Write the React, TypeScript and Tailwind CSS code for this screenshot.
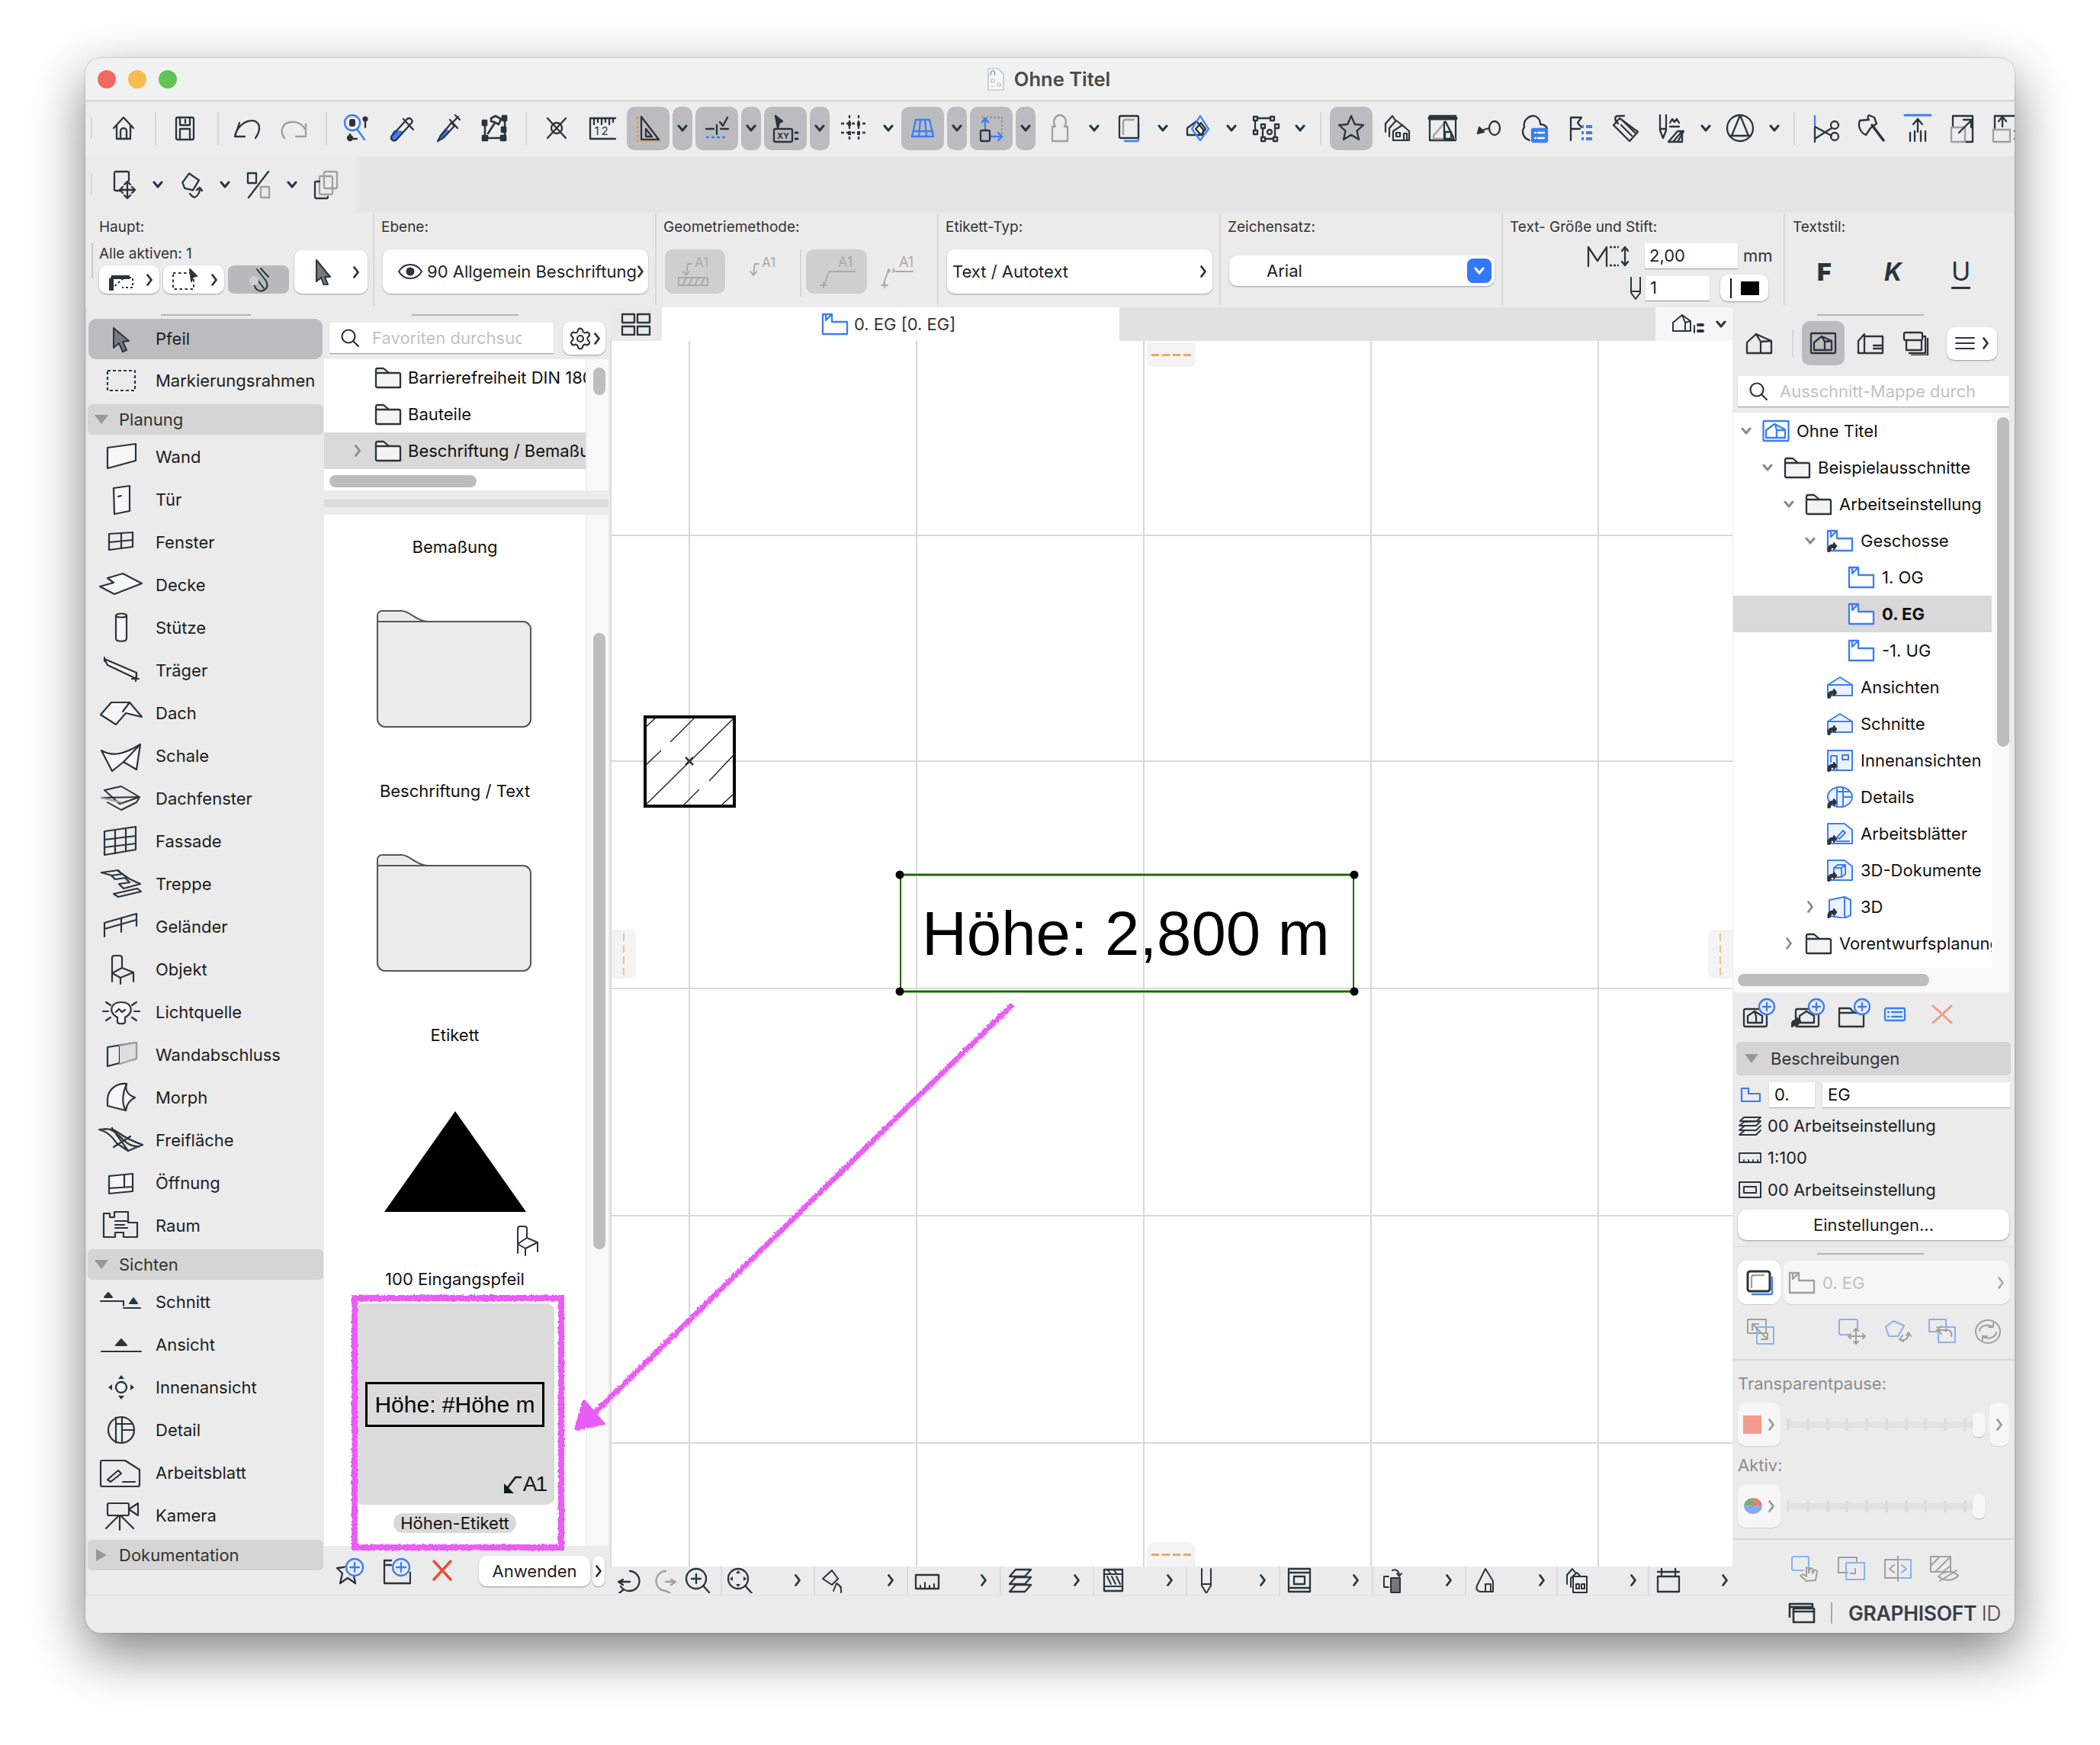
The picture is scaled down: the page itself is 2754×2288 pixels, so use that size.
import React from 'react';
import { Settings } from 'lucide-react';

const D = '#2b343d';
const B = '#3d7df6';
const G = '#a0a0a0';
const L = '#8db0f5';
const O = '#f0902f';

type P = { w?: number; h?: number; sw?: number; c?: string; children?: React.ReactNode; vb?: string };
const S = ({ w = 40, h = 40, sw = 2.3, c = D, vb, children }: P) => (
  <svg width={w} height={h} viewBox={vb || `0 0 ${w} ${h}`} fill="none" stroke={c} strokeWidth={sw} strokeLinejoin="round" strokeLinecap="round" className="block shrink-0">
    {children}
  </svg>
);
const V = ({ c = D }: { c?: string }) => (
  <S w={14} h={10} sw={3} c={c}><path d="M2 2l5 6 5-6" /></S>
);
const R = ({ c = D, s = 2.8 }: { c?: string; s?: number }) => (
  <S w={10} h={18} sw={s} c={c}><path d="M2.5 2.5L7.5 9l-5 6.5" /></S>
);

const Slot = ({ a, children }: { a?: boolean; children?: React.ReactNode }) => (
  <div className="flex h-[57px] w-[60px] shrink-0 items-center justify-center">
    <div className={a ? 'flex h-[57px] w-[56px] items-center justify-center rounded-[10px] bg-[#bcbcc0]' : 'flex h-[57px] w-[56px] items-center justify-center'}>{children}</div>
  </div>
);
const Ch = ({ a, c = 'w-[30px]' }: { a?: boolean; c?: string }) => (
  <div className={`flex h-[57px] shrink-0 items-center justify-center ${c}`}>
    <div className={a ? 'flex h-[57px] w-[26px] items-center justify-center rounded-[10px] bg-[#bcbcc0]' : 'flex h-[57px] w-[26px] items-center justify-center'}><V /></div>
  </div>
);
const Sep = ({ c = '' }: { c?: string }) => <div className={`w-[2px] shrink-0 bg-[#d6d6d6] ${c}`} />;

/* ---------- top toolbar icons ---------- */
const T = {
  home: <S><path d="M7 20L20 6l13 14M11 16v18h18V16M16 34V24a4 4 0 0 1 8 0v10" /></S>,
  save: <S><rect x="9" y="6" width="23" height="29" rx="2" /><path d="M14 6v10h13V6M21 9v4M14 35V21h13v14" /></S>,
  undo: <S w={44}><path d="M5 31h13M5 31l6-18M5 31C9 9 37 3 37 20c0 6-3 10-5 13" /></S>,
  redo: <S w={44} c={G}><path d="M38 31H25M38 31V15M10 33c-6-8-4-20 9-21 8-1 14 3 18 9" /></S>,
  insp: (
    <S>
      <circle cx="15" cy="13" r="10" stroke={B} />
      <rect x="11" y="8" width="8" height="10" rx="3" fill={D} stroke="none" />
      <path d="M21 21l10 14" stroke={B} />
      <path d="M32 7v12M12 28v6h9" />
      <circle cx="32" cy="8" r="2.4" fill={D} />
      <circle cx="12" cy="33" r="3" fill={D} />
    </S>
  ),
  pick: (
    <S>
      <path d="M10 24L6 32a3.5 3.5 0 0 0 6 3l9-10z" fill={B} stroke={B} />
      <path d="M27 8L7 30a3.6 3.6 0 0 0 6 5L33 13a4 4 0 0 0-6-5zM22 8l13 14" />
    </S>
  ),
  inj: (
    <S>
      <path d="M17 22l-7 9 4 2 8-8z" fill={B} stroke={B} />
      <path d="M25 13L11 30l-4 7 7-4 15-16zM23 9l10 11M27 12l7-7M30 3l6 6" />
    </S>
  ),
  ham: (
    <S sw={2.6}>
      <path d="M10 33h25M35 33V7M9 28V14" />
      <rect x="6" y="30" width="6" height="6" fill={D} />
      <rect x="30" y="30" width="6" height="6" fill={D} />
      <rect x="32" y="4" width="5" height="6" fill={D} />
      <rect x="31" y="19" width="5" height="6" fill={D} />
      <rect x="6" y="10" width="5" height="6" fill={D} />
      <path d="M13 27l9-14M17 7l6-3 7 4-3 7-6-3-4-1z" />
    </S>
  ),
  cross: <S><circle cx="20" cy="20" r="7" /><path d="M8 7l24 26M32 7L8 33" /></S>,
  ruler: (
    <S>
      <path d="M4 7h33M4 7v27h33M9 7v8M14 7v5M19 7v8M24 7v5M29 7v8M34 7v5" />
      <text x="20" y="29" textAnchor="middle" fontSize="15" fill={D} stroke="none" fontFamily="Inter,sans-serif" letterSpacing="3">12</text>
    </S>
  ),
  tri: (
    <S>
      <path d="M11 5l23 30H11z M17 21l8 10h-8z" />
      <path d="M6 5v32h30" stroke={O} strokeDasharray="3 3" strokeLinecap="butt" />
    </S>
  ),
  snap: (
    <S>
      <path d="M6 21h10M25 21h10M20 16v12M24 12l4 5 6-11" />
      <path d="M6 32h28" stroke={B} strokeDasharray="4 3" strokeLinecap="butt" />
    </S>
  ),
  xy: (
    <S>
      <path d="M7 4l9 7-4 2-2 7z" fill={D} stroke={D} />
      <rect x="5" y="21" width="24" height="17" rx="2" />
      <text x="17" y="34" textAnchor="middle" fontSize="11" fontWeight="700" fill={D} stroke="none" fontFamily="Inter,sans-serif">XY</text>
      <path d="M33 26h3M33 34h3" strokeWidth="3" />
    </S>
  ),
  grid: (
    <S>
      <path d="M14 3v34M26 3v34M3 14h34M3 26h34" strokeDasharray="4 3" strokeLinecap="butt" />
      <rect x="12" y="12" width="4" height="5" fill={D} stroke="none" />
      <rect x="24" y="12" width="4" height="5" fill={D} stroke="none" />
      <rect x="12" y="24" width="4" height="5" fill={D} stroke="none" />
      <rect x="24" y="24" width="4" height="5" fill={D} stroke="none" />
    </S>
  ),
  trap: <S c={B}><path d="M11 9h18l5 22H6zM8 24h25M17 9l-2 22M23 9l2 22" /></S>,
  wallb: (
    <S>
      <path d="M8 6h26v28" stroke={G} strokeDasharray="3 2" strokeWidth="3" strokeLinecap="butt" />
      <path d="M12 22V8M8 12l4-5 4 5M19 31h15M29 26l5 5-5 5" stroke={B} />
      <rect x="6" y="23" width="12" height="14" rx="2" />
    </S>
  ),
  pers: <S c={G}><path d="M14 18c-5-8 1-15 6-15s11 7 6 15h4v19H10V18z" /></S>,
  stack: (
    <S>
      <path d="M33 14v21a2 2 0 0 1-2 2H15" stroke={B} />
      <rect x="8" y="4" width="25" height="29" rx="2" />
      <path d="M13 28V12a3 3 0 0 1 3-3h11" stroke={G} />
    </S>
  ),
  dia: (
    <S>
      <path d="M7 20l12-9 9 11v7H7zM18 21l7-8 6 8-6 8z" />
      <path d="M24 4l11 17-11 15-11-15z" stroke={B} />
    </S>
  ),
  nodes: (
    <S>
      <rect x="4" y="5" width="5" height="5" /><rect x="26" y="5" width="5" height="5" />
      <rect x="4" y="23" width="5" height="5" /><rect x="32" y="15" width="5" height="5" />
      <rect x="14" y="32" width="5" height="5" /><rect x="30" y="32" width="5" height="5" />
      <rect x="14" y="15" width="5" height="5" />
      <path d="M9 7h17M6 10v13M32 20v12M19 34h11M16 20v12" />
      <circle cx="25" cy="25" r="3" />
    </S>
  ),
  star: <S><path d="M20 4l4.7 11 11.3 1-8.6 7.6 2.7 11.4-10.1-6.2L9.900 35l2.700-11.400L4 16l11.300-1z" /></S>,
  houses: (
    <S sw={2.2}>
      <path d="M5 25V14L14 4l4 6M10 31V20l9-10 9 7" />
      <path d="M15 36V24l12-8 9 8v12z" />
      <rect x="19" y="26" width="5" height="5" />
      <path d="M29 36V27h4v9" />
    </S>
  ),
  winh: (
    <S>
      <rect x="3" y="4" width="34" height="32" />
      <path d="M3 7h34" strokeWidth="5" />
      <path d="M24 11l-16 19v4h28" stroke={G} />
      <path d="M24 12l10 20v3H22V12z" fill="#ebebeb" />
      <rect x="23" y="25" width="8" height="9" />
    </S>
  ),
  key: (
    <S>
      <ellipse cx="28" cy="20" rx="7" ry="9" />
      <path d="M21 20l-10 3" />
      <path d="M6 27l2-8 6 6z" fill={D} />
    </S>
  ),
  cloud: (
    <S>
      <path d="M14 36C5 33 3 24 7 19 5 10 12 5 17 4c6-1 11 4 11 11 6 0 8 3 9 6" />
      <rect x="17" y="21" width="20" height="17" rx="2" fill={B} stroke={B} />
      <path d="M21 26h1M25 26h8M21 33h1M25 33h8" stroke="#fff" />
    </S>
  ),
  flist: (
    <S>
      <path d="M8 36V6h14l-5 7 5 6M8 21h12" />
      <path d="M22 18h3M28 18h8M22 26h3M28 26h8M22 34h3M28 34h8" stroke={B} strokeWidth="4" strokeLinecap="butt" />
    </S>
  ),
  tag: (
    <S>
      <path d="M12 8l24 18-11 12L4 17z" transform="translate(0 -1)" />
      <path d="M14 16l14 14M17 11l15 15" />
      <path d="M10 14C5 10 5 4 10 4h8" />
    </S>
  ),
  penz: (
    <S>
      <path d="M5 3v20l4 10 4-10V3M5 21h8" />
      <path d="M18 13l3-5 3 4 3-4 3 5M18 18h12" />
      <path d="M16 38l12-14h8l-8 14z M22 38l12-14M34 24v14h-6" />
    </S>
  ),
  circ: <S><ellipse cx="20" cy="20" rx="17" ry="17" /><path d="M20 3L9 30h22zM6 30h28" /></S>,
  scis: (
    <S>
      <path d="M5 4v12" stroke={B} />
      <path d="M5 20v18M5 18l22 12M5 34l22-14" />
      <circle cx="31" cy="16" r="5" />
      <circle cx="31" cy="31" r="5" />
    </S>
  ),
  axe: (
    <S>
      <path d="M16 3c-2 2-2 4 0 6L4 10c-3 8 1 16 8 19l6-9 8-6-3-8z" />
      <path d="M20 16l15 20" strokeWidth="3.500" />
    </S>
  ),
  up: (
    <S>
      <path d="M3 3h34" stroke={B} strokeWidth="3" />
      <path d="M20 8v17M14 15l6-7 6 7M10 26v11M16 24v13M24 24v13M30 24v13" />
    </S>
  ),
  resz: (
    <S>
      <path d="M6 18V4h26v34H22" />
      <rect x="4" y="19" width="18" height="19" stroke={G} />
      <path d="M14 26l16-16M20 9h10v10" />
    </S>
  ),
  upb: (
    <S>
      <path d="M8 20V4h26" />
      <rect x="6" y="22" width="22" height="16" stroke={G} />
      <path d="M18 18V6M13 11l5-6 5 6M34 24h4M34 34h4" />
    </S>
  ),
  mv: (
    <S>
      <path d="M14 28H9a2 2 0 0 1-2-2V5a2 2 0 0 1 2-2h15a2 2 0 0 1 2 2v10" />
      <path d="M24 16v22M14 27h20M20 20l4-4 4 4M20 34l4 4 4-4M18 23l-4 4 4 4M30 23l4 4-4 4" />
    </S>
  ),
  rot: (
    <S>
      <path d="M8 19l7-13 14 7-6 14-11-1z" transform="rotate(8 20 20)" />
      <path d="M24 37c4-2 6-4 7-10M27 27l4-3 3 4M18 32c2 3 4 4 6 5" />
    </S>
  ),
  pct: (
    <S>
      <rect x="6" y="5" width="11" height="13" />
      <path d="M33 3L7 37" />
      <rect x="23" y="23" width="11" height="14" stroke={G} />
    </S>
  ),
  copy: (
    <S>
      <rect x="18" y="3" width="17" height="22" rx="2" stroke={G} />
      <rect x="12" y="9" width="17" height="24" rx="2" stroke={G} />
      <path d="M12 16H8a2 2 0 0 0-2 2v18a2 2 0 0 0 2 2h14a2 2 0 0 0 1-2" />
    </S>
  ),
};

/* ---------- element list icons ---------- */
const E = ({ children, sw = 2.2 }: { children: React.ReactNode; sw?: number }) => (
  <S w={60} h={42} sw={sw}>{children}</S>
);
const F = '#f7f7f7';
const tools1 = [
  ['Wand', <E><path d="M12 9l37-5v22L12 36z" fill={F} /></E>],
  ['Tür', <E><path d="M20 6l21-3v33l-20 4z" fill={F} /><path d="M26 17l4-1" /></E>],
  ['Fenster', <E><path d="M14 10l31-2v19l-31 4z" /><path d="M30 9v20M14 21l31-3" /></E>],
  ['Decke', <E><path d="M2 23l18-5-8-6 20-6 25 13-36 14z" fill={F} /></E>],
  ['Stütze', <E><path d="M23 5v30c0 5 14 5 14 0V5" fill={F} /><ellipse cx="30" cy="5" rx="7" ry="2.500" fill={F} /></E>],
  ['Träger', <E><path d="M8 6L50 24v8L12 14zM8 4v5M50 24l-1 11M44 32h9" fill={F} /></E>],
  ['Dach', <E><path d="M3 23L17 7h24l16 19-21-5-13 15z" fill={F} /><path d="M41 7l-9 12" /></E>],
  ['Schale', <E><path d="M4 14c14 8 28 6 51-8l-5 33-17-10-15 12z" fill={F} /><path d="M33 29L55 6" /></E>],
  ['Dachfenster', <E sw={2}><path d="M8 10l22-5 24 14-26 9z" /><path d="M4 20l50-1-4 7-20 10-18-10" /><path d="M4 20l26 6" stroke={G} /></E>],
  ['Fassade', <E><path d="M8 8l41-6v30L8 39zM8 19l41-5M8 29l41-5M22 6v31M36 4v30" /></E>],
  ['Treppe', <E><path d="M4 6l22-3 5 5-14 2 5 5 13-2 6 6-14 2 6 6 22-6-15-7-7-5-7-5" /><path d="M4 6l14 4" /><path d="M26 38l30-7-5-4-31 7z" /></E>],
  ['Geländer', <E><path d="M8 16L50 4M8 24l42-12M8 16v18M30 10v18M50 4v16" /></E>],
  ['Objekt', <E><path d="M18 26V6a3 3 0 0 1 3-3h7a3 3 0 0 1 3 3v13l15 6M18 26l13-7M18 26l11 6 17-7M18 26v11M29 32v8M46 25v12" /></E>],
  ['Lichtquelle', (
    <E><path d="M22 26c-8-6-6-18 8-18s16 12 8 18l-3 2v6c0 3-10 3-10 0v-6z" fill={F} /><path d="M23 21l4-4 4 4 4-3M6 20h7M47 20h7M10 8l6 4M50 8l-6 4M10 32l6-4M50 32l-6-4" /></E>
  )],
  ['Wandabschluss', <E><path d="M12 11l38-6v21l-38 10z" /><path d="M28 9v24" /><path d="M28 9l22-4v21l-22 7" stroke={G} fill="#dedede" /></E>],
  ['Morph', <E><path d="M12 24C12 12 22 2 37 3c-2 8 0 14 11 18-6 3-11 9-12 17L12 32z" fill={F} /><path d="M36 38C30 28 32 14 37 3" /></E>],
  ['Freifläche', <E><path d="M1 7c16-2 20 0 28 6s18 10 29 14l-19 8-15-10C18 16 12 10 1 7zM18 5c6 10 16 22 21 30M42 16l-22 14M8 6c20 0 24 24 44 23" /></E>],
  ['Öffnung', <E><path d="M14 12l31-3v23l-31 3zM14 28l31-2M34 10v16" fill={F} /></E>],
  ['Raum', <E><path d="M7 5h8v5h6V3h18v14h12v19H33v-6H22v6H7zM22 15h16M22 20h12M22 24h16" /></E>],
] as [string, React.ReactNode][];
const tools2 = [
  ['Schnitt', <E sw={2}><path d="M3 20h30v6M33 29h22" /><path d="M13 9l5 6H8zM46 16l5 7H41z" fill={D} /></E>],
  ['Ansicht', <E sw={2}><path d="M4 30h52" /><path d="M30 14l7 8H23z" fill={D} /></E>],
  ['Innenansicht', (
    <S w={60} h={40}><circle cx="30" cy="20" r="7" fill={F} /><path d="M30 4l4 5h-8zM30 36l4-5h-8zM13 20l5-4v8zM47 20l-5-4v8z" fill={D} stroke="none" /></S>
  )],
  ['Detail', <E><ellipse cx="30" cy="21" rx="17" ry="17" /><path d="M23 4.500v33M31 3.800v34M31 21h16M23 13h22" /></E>],
  ['Arbeitsblatt', (
    <E><path d="M5 5h30l19 12v20a2 2 0 0 1-2 2H5a2 2 0 0 1-2-2V7a2 2 0 0 1 2-2z" /><path d="M12 30l14-12 4 4-14 11zM32 33h16" /></E>
  )],
  ['Kamera', <E><rect x="12" y="5" width="28" height="16" rx="2" /><path d="M40 13l12-8v16zM28 22v18M26 22L10 38M30 22l16 16" /></E>],
] as [string, React.ReactNode][];

const Row = ({ label, icon, a }: { label: string; icon: React.ReactNode; a?: boolean }) => (
  <div className={a ? 'mx-[2px] flex h-[53px] items-center rounded-[10px] bg-[#bcbcc0] pl-[13px]' : 'mx-[2px] flex h-[56px] items-center pl-[13px]'}>
    <div className="mr-[15px] flex w-[60px] shrink-0 justify-center">{icon}</div>
    <span className="whitespace-nowrap text-[22px] text-[#1d1d1d]">{label}</span>
  </div>
);
const Head = ({ label, open = true, c = 'mt-[3px]' }: { label: string; open?: boolean; c?: string }) => (
  <div className={`mx-px flex h-[40px] items-center rounded-[6px] bg-[#d5d5d5] ${c}`}>
    <div className="ml-[9px] mr-[14px] flex w-[18px] justify-center">
      {open ? (
        <svg width="18" height="12"><path d="M0 0h18L9 12z" fill="#989898" /></svg>
      ) : (
        <svg width="14" height="16"><path d="M0 0l14 8-14 8z" fill="#989898" /></svg>
      )}
    </div>
    <span className="text-[22px] text-[#333]">{label}</span>
  </div>
);

const Folder = () => (
  <S w={36} h={30}><path d="M2 26V5a2 2 0 0 1 2-2h8l7 6h13a2 2 0 0 1 2 2v17H4a2 2 0 0 1-2-2zM2 9h17" fill="#f4f4f4" /></S>
);
const BigFolder = () => (
  <svg width="205" height="155" viewBox="0 0 205 155" fill="#ebebeb" stroke="#555" strokeWidth="2" className="-ml-[2px] -mt-[10px] block">
    <path d="M2 143V8a6 6 0 0 1 6-6h26c10 0 20 14 34 14h125a10 10 0 0 1 10 10v118a10 10 0 0 1-10 10H12a10 10 0 0 1-10-10z" />
    <path d="M2 16h66" />
  </svg>
);
const Search = ({ c = D }: { c?: string }) => (
  <S w={26} h={26} c={c} sw={2.2}><circle cx="11" cy="11" r="8.500" /><path d="M17 17l7 7" /></S>
);
const Floor = ({ c = B, badge, fill = '#fff' }: { c?: string; badge?: boolean; fill?: string }) => (
  <S w={36} h={30} c={c}>
    <path d="M2 2h12l0 10h20v16H2zM6 2v8l6-6" fill={fill} />
    {badge && <Bdg />}
  </S>
);
const Bdg = () => (
  <path d="M2 29v-3c0-4 3-6 7-6l1-3 4 5-4 5-1-3c-2 0-3 1-3 3l-1 2z" fill={D} stroke={D} strokeWidth="1" />
);
const Tico = ({ children }: { children: React.ReactNode }) => (
  <S w={36} h={30} c={B} sw={2}>{children}<Bdg /></S>
);

const treeRows: { l: string; d: number; ch?: 'v' | 'r'; ic: React.ReactNode; sel?: boolean }[] = [
  { l: 'Ohne Titel', d: 0, ch: 'v', ic: <S w={36} h={30} c={B}><rect x="1.500" y="2" width="33" height="26" rx="1" /><path d="M5 24V14l11-8 14 7v11zM17 6l2 8v10M19 14l11 0" /></S> },
  { l: 'Beispielausschnitte', d: 1, ch: 'v', ic: <Folder /> },
  { l: 'Arbeitseinstellung', d: 2, ch: 'v', ic: <Folder /> },
  { l: 'Geschosse', d: 3, ch: 'v', ic: <Floor badge /> },
  { l: '1. OG', d: 4, ic: <Floor /> },
  { l: '0. EG', d: 4, ic: <Floor />, sel: true },
  { l: '-1. UG', d: 4, ic: <Floor /> },
  { l: 'Ansichten', d: 3, ic: <Tico><path d="M2 12L18 2l16 10v14H2z" fill="#eaf2ff" /><path d="M2 12h32" /></Tico> },
  { l: 'Schnitte', d: 3, ic: <Tico><path d="M2 12L18 2l16 10v14H2z" fill="#eaf2ff" /><path d="M2 12h32" /></Tico> },
  { l: 'Innenansichten', d: 3, ic: <Tico><rect x="2" y="2" width="32" height="26" fill="#eaf2ff" /><path d="M14 28V9h-8v8M21 8h8v6h-8z" /></Tico> },
  { l: 'Details', d: 3, ic: <Tico><ellipse cx="18" cy="15" rx="16" ry="13" fill="#eaf2ff" /><path d="M14 2v26M22 2v26M22 15h12M14 8h16" /></Tico> },
  { l: 'Arbeitsblätter', d: 3, ic: <Tico><path d="M2 2h22l10 8v18H2z" fill="#eaf2ff" /><path d="M14 20l8-9 3 3-8 8zM14 25h16" /></Tico> },
  { l: '3D-Dokumente', d: 3, ic: <Tico><path d="M2 2h22l10 8v18H2z" fill="#eaf2ff" /><path d="M10 12h10l5-4M10 12v12h10V12M20 24l5-4V8H15l-5 4" /></Tico> },
  { l: '3D', d: 3, ch: 'r', ic: <Tico><path d="M4 6l20-4 8 4v20l-8 4-20-3z" fill="#eaf2ff" /><path d="M24 2v28" /></Tico> },
  { l: 'Vorentwurfsplanung', d: 2, ch: 'r', ic: <Folder /> },
];

const Slider = () => (
  <div className="relative ml-[8px] h-[32px] w-[260px]">
    <div className="absolute left-0 right-[10px] top-[12px] h-[8px] bg-[#e2e2e2]" />
    <div className="absolute left-0 right-[24px] top-[8px] flex justify-between">
      {[0, 1, 2, 3, 4, 5, 6, 7, 8, 9].map((i) => (
        <div key={i} className="h-[16px] w-[4px] bg-[#dddddd]" />
      ))}
    </div>
    <div className="absolute right-0 top-0 h-[32px] w-[16px] rounded-[6px] bg-[#f6f6f6] shadow-[0_1px_1px_rgba(0,0,0,0.2)]" />
  </div>
);

const white = 'rounded-[10px] bg-white shadow-[0_1px_2px_rgba(0,0,0,0.35)]';
const soft = 'rounded-[10px] bg-[#f6f6f6] shadow-[0_1px_1px_rgba(0,0,0,0.12)]';

const DashH = () => (
  <div className="flex gap-[4px]">
    {[0, 1, 2, 3].map((i) => <div key={i} className="h-[3px] w-[10px] bg-[#f2a55a]" />)}
  </div>
);
const DashV = () => (
  <div className="flex flex-col gap-[5px]">
    {[0, 1, 2, 3].map((i) => <div key={i} className="h-[10px] w-[2px] bg-[#f4c08d]" />)}
  </div>
);

const LabelSec = ({ t, c = 'w-[370px]', children }: { t: string; c?: string; children?: React.ReactNode }) => (
  <div className={`relative h-[120px] shrink-0 border-r-2 border-[#d8d8d8] pl-[9px] ${c}`}>
    <div className="flex h-[34px] items-center text-[19px] leading-none text-[#333]">{t}</div>
    {children}
  </div>
);

export default function App() {
  return (
    <div className="relative h-[2288px] w-[2754px] overflow-hidden bg-white pl-[112px] pt-[76px] font-['Inter',sans-serif]">
      <div className="flex h-[2065px] w-[2530px] flex-col overflow-hidden rounded-[20px] bg-[#ebebeb] shadow-[0_26px_70px_rgba(0,0,0,0.5),0_0_2px_rgba(0,0,0,0.4)]">
        {/* title bar */}
        <div className="relative flex h-[57px] shrink-0 items-center justify-center border-b-2 border-[#d4d4d4] bg-[#f0f1f1]">
          <div className="absolute left-[16px] flex gap-[16px]">
            <div className="h-[24px] w-[24px] rounded-full bg-[#ee6a5f]" />
            <div className="h-[24px] w-[24px] rounded-full bg-[#f5bd4f]" />
            <div className="h-[24px] w-[24px] rounded-full bg-[#61c454]" />
          </div>
          <div className="flex items-center gap-[12px] pr-[4px]">
            <S w={24} h={30} sw={1.200} c="#b9b9b9"><path d="M2 1h13l7 7v21H2z" fill="#f8f8f8" /><path d="M5 9c1-7 5-7 6 0" stroke={B} /><path d="M6 15h4v4H6zM14 20h4v4h-4zM6 24h4" /></S>
            <span className="text-[25.500px] font-semibold leading-none text-[#4a4a4a]">Ohne Titel</span>
          </div>
        </div>

        {/* toolbar 1 */}
        <div className="flex h-[72px] shrink-0 items-center overflow-hidden bg-[#ededed] pl-[7px] pb-[2px]">
          <Sep c="mr-[11px] h-[28px]" />
          <Slot>{T.home}</Slot>
          <Sep c="ml-[11px] mr-[7px] h-[43px]" />
          <Slot>{T.save}</Slot>
          <Sep c="ml-[13px] mr-[8px] h-[43px]" />
          <Slot>{T.undo}</Slot>
          <Slot>{T.redo}</Slot>
          <Sep c="ml-[12px] mr-[8px] h-[43px]" />
          <Slot>{T.insp}</Slot>
          <Slot>{T.pick}</Slot>
          <Slot>{T.inj}</Slot>
          <Slot>{T.ham}</Slot>
          <Sep c="ml-[12px] mr-[9px] h-[43px]" />
          <Slot>{T.cross}</Slot>
          <Slot>{T.ruler}</Slot>
          <Slot a>{T.tri}</Slot>
          <Ch a />
          <Slot a>{T.snap}</Slot>
          <Ch a />
          <Slot a>{T.xy}</Slot>
          <Ch a />
          <Slot>{T.grid}</Slot>
          <Ch />
          <Slot a>{T.trap}</Slot>
          <Ch a />
          <Slot a>{T.wallb}</Slot>
          <Ch a />
          <Slot>{T.pers}</Slot>
          <Ch />
          <Slot>{T.stack}</Slot>
          <Ch />
          <Slot>{T.dia}</Slot>
          <Ch />
          <Slot>{T.nodes}</Slot>
          <Ch />
          <Sep c="ml-[11px] mr-[9px] h-[43px]" />
          <Slot a>{T.star}</Slot>
          <Slot>{T.houses}</Slot>
          <Slot>{T.winh}</Slot>
          <Slot>{T.key}</Slot>
          <Slot>{T.cloud}</Slot>
          <Slot>{T.flist}</Slot>
          <Slot>{T.tag}</Slot>
          <Slot>{T.penz}</Slot>
          <Ch />
          <Slot>{T.circ}</Slot>
          <Ch />
          <Sep c="ml-[10px] mr-[11px] h-[43px]" />
          <Slot>{T.scis}</Slot>
          <Slot>{T.axe}</Slot>
          <Slot>{T.up}</Slot>
          <Slot>{T.resz}</Slot>
          <div className="-ml-[7px]"><Slot>{T.upb}</Slot></div>
        </div>

        {/* toolbar 2 */}
        <div className="flex h-[74px] shrink-0 bg-[#e5e5e5]">
          <div className="flex w-[355px] items-center bg-[#ebebeb] pl-[7px]">
            <Sep c="mr-[12px] h-[28px]" />
            <Slot>{T.mv}</Slot>
            <Ch c="w-[28px]" />
            <Slot>{T.rot}</Slot>
            <Ch c="w-[28px]" />
            <Slot>{T.pct}</Slot>
            <Ch c="w-[28px]" />
            <Slot>{T.copy}</Slot>
          </div>
        </div>

        {/* info box */}
        <div className="flex h-[124px] shrink-0 bg-[#ebebeb] pt-[1px]">
          <LabelSec t="Haupt:" c="w-[379px] pl-[18px]">
            <div className="mt-[-20px] flex h-[91px] items-end">
              <div className="relative w-[254px]">
                <div className="text-[19px] leading-none text-[#333]">Alle aktiven: 1</div>
                <div className="absolute -left-[10px] -top-[4px] h-[46px] w-[2px] bg-[#c8c8c8]" />
                <div className="mt-[6px] flex gap-[5px]">
                  <div className={`flex h-[37px] w-[79px] items-center justify-between pl-[10px] pr-[8px] ${white}`}>
                    <S w={36} h={30} sw={2}><path d="M6 27L26 9M4 15h4M4 23V12h30v13H20" strokeDasharray="3 3" strokeLinecap="butt" /><rect x="3" y="13" width="6" height="16" fill={D} stroke="none" /><rect x="6" y="9" width="24" height="5" fill={D} stroke="none" /></S>
                    <R />
                  </div>
                  <div className={`flex h-[37px] w-[80px] items-center justify-between pl-[10px] pr-[8px] ${white}`}>
                    <S w={36} h={30} sw={2}><rect x="3" y="6" width="27" height="21" strokeDasharray="3.500 3.500" strokeLinecap="butt" /><path d="M25 1l9 9-5 1-2 6z" fill={D} /></S>
                    <R />
                  </div>
                  <div className="flex h-[37px] w-[80px] items-center justify-center rounded-[8px] bg-[#b9b9bd]">
                    <S w={32} h={34} sw={2}><path d="M14 3l11 14c4 6 3 12-3 14s-10-2-11-6l-2-6M19 2l10 11M14 16l9 12" /><circle cx="10" cy="18" r="6" fill="#cfcfcf" stroke="none" /></S>
                  </div>
                </div>
              </div>
              <div className={`ml-[2px] flex h-[57px] w-[96px] items-center justify-between pl-[28px] pr-[10px] ${white}`}>
                <svg width="20" height="34" viewBox="0 0 20 34"><path d="M1 1l18 22-7 0 4 10-5 1-4-10-6 5z" fill="#757a80" stroke={D} strokeWidth="2" strokeLinejoin="round" /></svg>
                <R />
              </div>
            </div>
          </LabelSec>
          <LabelSec t="Ebene:">
            <div className={`ml-[2px] mt-[13px] flex h-[58px] w-[348px] items-center ${white}`}>
              <div className="ml-[20px] mr-[6px] shrink-0">
                <S w={32} h={24} sw={2}><path d="M1 12C8 0 24 0 31 12 24 24 8 24 1 12z" /><circle cx="16" cy="12" r="5.500" fill={D} stroke="none" /></S>
              </div>
              <span className="whitespace-nowrap text-[22px] leading-none text-[#222]">90 Allgemein Beschriftung</span>
              <div className="ml-auto mr-[5px]"><R /></div>
            </div>
          </LabelSec>
          <LabelSec t="Geometriemethode:">
            <div className="mt-[13px] flex items-start pl-[2px]">
              <div className="flex h-[58px] w-[79px] items-center justify-center rounded-[10px] bg-[#cfcfcf]">
                <GeoA hatch />
              </div>
              <div className="flex h-[58px] w-[98px] items-center justify-center"><GeoA /></div>
              <div className="mr-[6px] h-[62px] w-[2px] bg-[#d6d6d6]" />
              <div className="flex h-[58px] w-[80px] items-center justify-center rounded-[10px] bg-[#cfcfcf]"><GeoB /></div>
              <div className="flex h-[58px] w-[80px] items-center justify-center"><GeoB dots /></div>
            </div>
          </LabelSec>
          <LabelSec t="Etikett-Typ:">
            <div className={`ml-[2px] mt-[13px] flex h-[58px] w-[348px] items-center justify-between pl-[7px] pr-[7px] ${white}`}>
              <span className="text-[22px] leading-none text-[#222]">Text / Autotext</span>
              <R />
            </div>
          </LabelSec>
          <LabelSec t="Zeichensatz:">
            <div className={`ml-[2px] mt-[21px] flex h-[40px] w-[348px] items-center justify-between pl-[49px] pr-[4px] ${white}`}>
              <span className="text-[22px] leading-none text-[#222]">Arial</span>
              <div className="flex h-[32px] w-[32px] items-center justify-center rounded-[8px] bg-[#3478f6]"><V c="#fff" /></div>
            </div>
          </LabelSec>
          <LabelSec t="Text- Größe und Stift:">
            <div className="absolute left-[110px] top-[39px] flex h-[33px] items-center">
              <S w={56} h={30}><path d="M2 28V3l12 18L26 3v25" /><path d="M30 3h12M30 27h12" strokeDasharray="3 2" strokeLinecap="butt" /><path d="M50 4v22M46 8l4-5 4 5M46 22l4 5 4-5" /></S>
              <div className="ml-[20px] flex h-[33px] w-[122px] items-center bg-white pl-[6px] text-[22px] text-[#222] shadow-[0_1px_1px_rgba(0,0,0,0.3)]">2,00</div>
              <span className="ml-[7px] text-[22px] text-[#333]">mm</span>
            </div>
            <div className="absolute left-[166px] top-[80px] flex h-[35px] items-center">
              <S w={16} h={32} sw={2}><path d="M2 2v20l6 8 6-8V2M2 20h12" /></S>
              <div className="ml-[5px] flex h-[32px] w-[84px] items-center bg-white pl-[6px] text-[22px] text-[#222] shadow-[0_1px_1px_rgba(0,0,0,0.3)]">1</div>
              <div className={`ml-[14px] flex h-[35px] w-[63px] items-center justify-center gap-[12px] ${white}`}>
                <div className="h-[26px] w-[2px] bg-[#111]" />
                <div className="h-[18px] w-[24px] bg-black" />
              </div>
            </div>
          </LabelSec>
          <div className="relative h-[120px] flex-1 pl-[10px]">
            <div className="flex h-[34px] items-center text-[19px] leading-none text-[#333]">Textstil:</div>
            <div className="mt-[23px] flex pl-[32px]">
              <span className="w-[88px] text-[32px] font-black leading-[40px] text-[#2b343d]">F</span>
              <span className="w-[88px] text-[32px] font-bold italic leading-[40px] text-[#2b343d]">K</span>
              <span className="h-[42px] border-b-[3px] border-[#2b343d] text-[34px] leading-[38px] text-[#2b343d]">U</span>
            </div>
          </div>
        </div>

        {/* main */}
        <div className="flex min-h-0 flex-1">
          {/* left tool list */}
          <div className="w-[313px] shrink-0 border-l-2 border-[#dcdcdc]">
            <div className="mx-auto mt-[9px] h-[2px] w-[118px] bg-[#b5b5b5]" />
            <div className="mt-[4px]">
              <Row label="Pfeil" a icon={<svg width="24" height="34" viewBox="0 0 24 34"><path d="M2 2l20 17-8 1 5 11-5 2-5-11-7 6z" fill="#757a80" stroke={D} strokeWidth="2" strokeLinejoin="round" /></svg>} />
              <Row label="Markierungsrahmen" icon={<S w={40} h={32} sw={2.200}><rect x="2" y="3" width="36" height="26" strokeDasharray="4 3" strokeLinecap="butt" /></S>} />
            </div>
            <Head label="Planung" c="mb-[1px] mt-[3px]" />
            {tools1.map(([l, ic]) => <Row key={l} label={l} icon={ic} />)}
            <Head label="Sichten" c="mb-[1px] mt-[3px]" />
            {tools2.map(([l, ic]) => <Row key={l} label={l} icon={ic} />)}
            <Head label="Dokumentation" open={false} c="mt-[4px]" />
          </div>

          {/* favorites */}
          <div className="flex w-[375px] shrink-0 flex-col">
            <div className="flex h-[20px] shrink-0 items-center justify-center pr-[6px]"><div className="h-[2px] w-[140px] bg-[#b5b5b5]" /></div>
            <div className="flex h-[48px] shrink-0 items-start pl-[7px]">
              <div className="flex h-[40px] w-[294px] items-center bg-white pl-[14px] shadow-[0_1px_1px_rgba(0,0,0,0.3)]">
                <Search />
                <span className="ml-[16px] w-[196px] overflow-hidden whitespace-nowrap text-[22px] leading-none text-[#c2c2c2]">Favoriten durchsuchen</span>
              </div>
              <div className={`-mt-[1px] ml-[12px] flex h-[43px] w-[56px] items-center justify-center gap-[1px] ${white}`}>
                <Settings size={32} strokeWidth={1.600} color={D} />
                <R />
              </div>
            </div>
            <div className="flex h-[172px] w-[373px] shrink-0 bg-[#f9f9f9]">
              <div className="h-[172px] w-[345px] shrink-0 overflow-hidden border-r-2 border-[#eeeeee] bg-white">
                {['Barrierefreiheit DIN 18040', 'Bauteile', 'Beschriftung / Bemaßung'].map((t, i) => (
                  <div key={t} className={i === 2 ? 'flex h-[48px] items-center bg-[#d9d9d9] pl-[39px]' : 'flex h-[48px] items-center pl-[39px]'}>
                    <div className="w-[18px] shrink-0">{i === 2 && <R c="#888" />}</div>
                    <div className="ml-[9px] mr-[8px] shrink-0"><Folder /></div>
                    <span className="whitespace-nowrap text-[22px] leading-none text-[#111]">{t}</span>
                  </div>
                ))}
              </div>
              <div className="pl-[8px] pt-[11px]"><div className="h-[36px] w-[16px] rounded-full bg-[#bdbdbd]" /></div>
            </div>
            <div className="relative -mt-[20px] ml-[7px] h-[16px] w-[193px] rounded-full bg-[#bdbdbd]" />
            <div className="mt-[16px] h-[10px] w-[373px] shrink-0 bg-[#dcdcdc]" />
            <div className="mt-[10px] flex h-[1352px] w-[373px] shrink-0 bg-[#f9f9f9]">
              <div className="h-full w-[345px] shrink-0 overflow-hidden border-r-2 border-[#eeeeee] bg-white">
                <div className="flex h-[74px] items-center justify-center pt-[10px]"><span className="text-[22px] text-[#111]">Bemaßung</span></div>
                <Card label="Beschriftung / Text"><BigFolder /></Card>
                <Card label="Etikett"><BigFolder /></Card>
                <Card label="100 Eingangspfeil">
                  <div className="relative flex h-[264px] w-[261px] items-start justify-center pt-[68px]">
                    <svg width="186" height="132"><path d="M93 0l93 132H0z" fill="#000" /></svg>
                    <div className="absolute bottom-[4px] right-[18px]">
                      <S w={36} h={44} sw={2}><path d="M6 26V6a3 3 0 0 1 3-3h6a3 3 0 0 1 3 3v12l14 6M6 26l12-8M6 26l10 6 16-8M6 26v12M16 32v9M32 24v12" /></S>
                    </div>
                  </div>
                </Card>
                <Card label="Höhen-Etikett" sel>
                  <div className="relative flex h-[264px] w-[261px] items-start justify-center rounded-[10px] bg-[#dbdbdb] pt-[103px]">
                    <div className="flex h-[59px] w-[235px] items-center justify-center border-[3px] border-black font-['Liberation_Sans',sans-serif] text-[30px] leading-none text-black">Höhe: #Höhe m</div>
                    <div className="absolute bottom-[14px] right-[11px] flex items-end">
                      <svg width="26" height="28" className="block"><path d="M24 6h-8L4 22" stroke="#0b1a20" strokeWidth="2.500" fill="none" /><path d="M1 14v13h13z" fill="#0b1a20" /></svg>
                      <span className="font-['Liberation_Sans',sans-serif] text-[28px] font-normal leading-[26px] tracking-[-2px] text-[#111]">A1</span>
                    </div>
                  </div>
                </Card>
              </div>
              <div className="pl-[8px] pt-[155px]"><div className="h-[808px] w-[16px] rounded-full bg-[#bdbdbd]" /></div>
            </div>
            <div className="flex h-[64px] shrink-0 items-start pl-[15px] pt-[13px]">
              <div className="mt-[2px] mr-[23px]"><S w={38} h={38}><path d="M14 12l-4 1-8 1 7 7-3 13 10-7 10 7-2-10" /><circle cx="25" cy="13" r="11" stroke={B} fill="#ebebeb" /><path d="M25 7v12M19 13h12" stroke={B} /></S></div>
              <div className="mt-[2px] mr-[27px]"><S w={38} h={38}><path d="M12 4H3v30h34V20M3 10h9" /><circle cx="25" cy="13" r="11" stroke={B} fill="#ebebeb" /><path d="M25 7v12M19 13h12" stroke={B} /></S></div>
              <div className="mt-[4px] mr-[34px]"><S w={28} h={30} c="#e8502f" sw={3.500}><path d="M3 3l22 24M25 3L3 27" /></S></div>
              <div className={`flex h-[40px] w-[146px] items-center justify-center text-[22px] leading-none text-[#222] ${white}`}>Anwenden</div>
              <div className={`ml-[3px] flex h-[40px] w-[16px] items-center justify-center ${white}`}><R /></div>
            </div>
          </div>

          {/* centre */}
          <div className="flex w-[1472px] shrink-0 flex-col">
            <div className="flex h-[44px] shrink-0">
              <div className="flex w-[68px] items-center justify-center bg-[#e9e9e9]">
                <S w={40} h={30}><rect x="2" y="2" width="16" height="11" /><rect x="22" y="2" width="16" height="11" /><rect x="2" y="18" width="16" height="11" /><rect x="22" y="18" width="16" height="11" /></S>
              </div>
              <div className="flex w-[600px] items-center bg-white pl-[209px]">
                <Floor />
                <span className="ml-[7px] text-[22px] leading-none text-[#333]">0. EG [0. EG]</span>
              </div>
              <div className="w-[703px] bg-[#e1e1e1]" />
              <div className="flex w-[101px] items-center justify-end gap-[13px] bg-[#f6f6f6] pr-[8px]">
                <S w={46} h={30} sw={2}><path d="M3 24V13L15 3l11 8v13zM15 3l4 10v11M19 13l7-2M31 17v9" /><path d="M36 16h6M36 24h6" strokeWidth="4" /></S>
                <V />
              </div>
            </div>
            <div className="relative h-[1607px] shrink-0 overflow-hidden border-l-2 border-[#dadada] bg-white">
              <svg className="absolute left-0 top-0" width="1470" height="1607">
                <g stroke="#d8d8d8" strokeWidth="2">
                  {[102, 400, 698, 996, 1294].map((x) => <line key={x} x1={x} x2={x} y1="0" y2="1607" />)}
                  {[255, 551, 849, 1147, 1445].map((y) => <line key={y} x1="0" x2="1470" y1={y} y2={y} />)}
                </g>
                <g>
                  <clipPath id="hc"><rect x="42" y="491" width="121" height="121" /></clipPath>
                  <g clipPath="url(#hc)" stroke="#222" strokeWidth="1.400">
                    <path d="M44 507L58 494M77 526L109 494M44 557L65 537M128 577L161 542M95 608L115 588M145 608L161 593M44 609L161 494" />
                  </g>
                  <rect x="44" y="493" width="117" height="117" fill="none" stroke="#000" strokeWidth="4" />
                  <path d="M97 546l10 10M107 546l-10 10" stroke="#333" strokeWidth="2.500" />
                </g>
                <rect x="379" y="701" width="594" height="151" fill="none" stroke="#1e6a12" strokeWidth="2" />
                <path d="M379 700H973M379 853H973" stroke="#8ac27f" strokeWidth="4" />
                <path d="M379 700H973M379 853H973" stroke="#1e5f12" strokeWidth="2" />
                {[[378, 700], [974, 700], [378, 853], [974, 853]].map(([x, y]) => (
                  <circle key={x + '-' + y} cx={x} cy={y} r="5.500" fill="#000" />
                ))}
              </svg>
              <div className="absolute left-[407px] top-[727px] whitespace-nowrap font-['Liberation_Sans',sans-serif] text-[81.500px] leading-[100px] text-black">Höhe: 2,800 m</div>

              <div className="absolute left-[702px] top-[2px] flex h-[32px] w-[64px] items-center justify-center rounded-b-[8px] bg-[#f3f3f3]"><DashH /></div>
              <div className="absolute bottom-0 left-[702px] flex h-[32px] w-[64px] items-center justify-center rounded-t-[10px] bg-[#f3f3f3]"><DashH /></div>
              <div className="absolute left-[0px] top-[772px] flex h-[64px] w-[32px] items-center justify-center rounded-r-[8px] bg-[#f3f3f3]"><DashV /></div>
              <div className="absolute right-0 top-[772px] flex h-[64px] w-[32px] items-center justify-center rounded-l-[8px] bg-[#f3f3f3]"><DashV /></div>
            </div>
            {/* bottom nav toolbar */}
            <div className="flex h-[37px] shrink-0 items-center overflow-hidden pb-[1px]">
              <div className="flex w-[145px] shrink-0 items-center justify-between pl-[8px] pr-[12px]">
                <S w={38} h={34}><path d="M9 16l-6 3 6 4M3 19h15" /><path d="M18 5a13 13 0 1 1-1 26 13 13 0 0 1-11-6M10 29l-6 5" /></S>
                <S w={38} h={34} c={G}><path d="M27 16l6 3-6 4M33 19H20" /><path d="M20 5a13 13 0 1 0 1 26M21 31l6 4" /></S>
                <S w={36} h={34}><circle cx="16" cy="15" r="13" /><path d="M16 9v12M10 15h12M25 24l8 9" /></S>
              </div>
              <NavSec><S w={40} h={34}><circle cx="16" cy="15" r="13" /><path d="M26 25l8 9" /><path d="M16 4l3 4h-6zM16 26l3-4h-6zM5 15l4-3v6zM27 15l-4-3v6z" fill={D} stroke="none" /></S></NavSec>
              <NavSec><S w={40} h={34} sw={2}><path d="M5 15L17 4l8 11-8 8zM19 31l4-10 6 5M23 21c4 2 7 5 6 12" /></S></NavSec>
              <NavSec><S w={34} h={30}><rect x="2" y="8" width="30" height="18" /><path d="M8 26v-4M14 26v-8M20 26v-4M26 26v-6" strokeWidth="2" /></S></NavSec>
              <NavSec><S w={32} h={34}><path d="M10 3h20l-8 9H2zM10 13h20l-8 9H2zM10 23h20l-8 9H2z" /></S></NavSec>
              <NavSec><S w={30} h={34}><rect x="3" y="3" width="24" height="28" /><path d="M3 9h24M3 25h24M7 12l5 10M13 12l5 10M19 12l5 10M8 4l4 5M16 4l4 5" strokeWidth="2" /></S></NavSec>
              <NavSec><S w={18} h={34} sw={2}><path d="M3 2v22l6 10 6-10V2M3 22h12" /></S></NavSec>
              <NavSec><S w={34} h={34}><rect x="3" y="2" width="28" height="30" /><path d="M3 7h28M3 27h28" /><rect x="10" y="12" width="14" height="10" /></S></NavSec>
              <NavSec><S w={30} h={34} sw={2}><path d="M10 12H4v14h6" /><rect x="13" y="14" width="12" height="19" fill="#777" /><path d="M15 4c5-2 9 1 9 7M21 8l3 4 3-4" /></S></NavSec>
              <NavSec narrow><S w={34} h={34} sw={2}><path d="M17 2L6 24c-2 5 1 8 5 8h16V18z" stroke={D} /><rect x="17" y="22" width="7" height="10" /></S></NavSec>
              <NavSec narrow><S w={32} h={34} sw={2}><path d="M3 22V10L10 2l4 5M8 26V14l8-7 4 4" /><rect x="11" y="12" width="18" height="21" /><rect x="15" y="22" width="4" height="6" /><rect x="22" y="22" width="4" height="6" /></S></NavSec>
              <NavSec narrow><S w={34} h={34}><path d="M3 6h28M8 2v8M26 2v8" /><rect x="3" y="12" width="28" height="20" /></S></NavSec>
            </div>
          </div>

          {/* right panel */}
          <div className="flex w-[369px] shrink-0 flex-col pl-[1px]">
            <div className="flex h-[18px] shrink-0 items-center justify-center pr-[8px]"><div className="mt-[2px] h-[2px] w-[140px] bg-[#b5b5b5]" /></div>
            <div className="flex h-[58px] shrink-0 items-center">
              <div className="ml-[16px] w-[36px]"><S w={36} h={30}><path d="M2 28V14L14 3l20 9v16zM14 3l6 10v15M20 13l14-1" /></S></div>
              <Sep c="ml-[25px] mr-[11px] h-[36px]" />
              <div className="flex h-[58px] w-[56px] items-center justify-center rounded-[10px] bg-[#bcbcc0]"><S w={36} h={30}><rect x="2" y="2" width="32" height="26" rx="1" /><path d="M6 24V14l10-8 13 6v12zM16 6l4 7v11M20 13l9-1" /></S></div>
              <div className="ml-[16px] w-[36px]"><S w={36} h={30}><path d="M2 28L2 12 10 3v25zM10 6h24v22H2M22 22h12M22 18h12" /></S></div>
              <div className="ml-[24px] w-[36px]"><S w={36} h={32}><rect x="2" y="2" width="24" height="10" rx="2" /><path d="M5 12v13h20V12M26 7h4v22H9M33 10v22H12" /></S></div>
              <div className={`ml-[22px] flex h-[43px] w-[66px] items-center justify-center gap-[9px] ${white}`}>
                <S w={26} h={20} sw={1.800}><path d="M1 3h24M1 10h24M1 17h24" /></S>
                <R />
              </div>
            </div>
            <div className="ml-[6px] mt-[14px] flex h-[40px] w-[356px] shrink-0 items-center bg-white pl-[14px] shadow-[0_1px_1px_rgba(0,0,0,0.3)]">
              <Search />
              <span className="ml-[15px] whitespace-nowrap text-[22px] leading-none text-[#c2c2c2]">Ausschnitt-Mappe durch</span>
            </div>
            <div className="mt-[8px] flex h-[728px] shrink-0">
              <div className="w-[339px] shrink-0 overflow-hidden bg-white">
                {treeRows.map((r) => (
                  <div key={r.l} className={r.sel ? 'flex h-[48px] items-center bg-[#d9d9d9]' : 'flex h-[48px] items-center'} style={{ paddingLeft: 7 + 28 * r.d }}>
                    <div className="flex w-[20px] shrink-0 justify-center">
                      {r.ch === 'v' && <V c="#8a8a8a" />}
                      {r.ch === 'r' && <R c="#8a8a8a" />}
                    </div>
                    <div className="ml-[11px] mr-[9px] shrink-0">{r.ic}</div>
                    <span className={r.sel ? 'whitespace-nowrap text-[22px] font-bold leading-none text-[#111]' : 'whitespace-nowrap text-[22px] leading-none text-[#111]'}>{r.l}</span>
                  </div>
                ))}
              </div>
              <div className="w-[23px] bg-[#f9f9f9] pl-[7px] pt-[6px]"><div className="h-[432px] w-[16px] rounded-full bg-[#bdbdbd]" /></div>
            </div>
            <div className="flex h-[32px] w-[362px] shrink-0 items-start bg-[#f9f9f9] pl-[6px] pt-[8px]"><div className="h-[16px] w-[251px] rounded-full bg-[#bdbdbd]" /></div>
            <div className="flex h-[58px] shrink-0 items-center">
              <div className="ml-[12px]"><S w={44} h={44}><rect x="2" y="15" width="30" height="23" rx="2" /><path d="M7 33V24l9-6 10 6v9zM16 18l2 7v8" /><circle cx="32" cy="12" r="10" stroke={B} fill="#ebebeb" /><path d="M32 7v10M27 12h10" stroke={B} /></S></div>
              <div className="ml-[20px]"><S w={44} h={44}><rect x="6" y="15" width="30" height="23" rx="2" /><path d="M11 33V24l9-6 10 6v9z" /><circle cx="33" cy="12" r="10" stroke={B} fill="#ebebeb" /><path d="M33 7v10M28 12h10" stroke={B} /><path d="M1 38v-3c0-4 3-5 6-5l1-3 4 4-4 5-1-3c-2 0-3 1-3 3z" fill={D} /></S></div>
              <div className="ml-[17px]"><S w={44} h={44}><path d="M2 38V14h14l6 6h12v18zM2 20h18" /><circle cx="32" cy="12" r="10" stroke={B} fill="#ebebeb" /><path d="M32 7v10M27 12h10" stroke={B} /></S></div>
              <div className="ml-[16px]"><S w={30} h={22} c={B}><rect x="2" y="3" width="26" height="16" rx="2" fill="#e4edfd" /><path d="M6 8h1M11 8h13M6 14h1M11 14h13" /></S></div>
              <div className="ml-[33px]"><S w={28} h={28} c="#ef9d8a" sw={3}><path d="M2 3l24 22M26 3L2 25" /></S></div>
            </div>
            <div className="ml-[4px] mt-[7px] flex h-[44px] w-[360px] shrink-0 items-center rounded-[6px] bg-[#d5d5d5]">
              <svg className="ml-[11px] mr-[16px]" width="18" height="12"><path d="M0 0h18L9 12z" fill="#989898" /></svg>
              <span className="text-[22px] text-[#333]">Beschreibungen</span>
            </div>
            <div className="mt-[9px] flex h-[33px] shrink-0 items-center pl-[9px]">
              <S w={28} h={24} c={B} sw={2.200}><path d="M2 3h9v7h15v10H2z" /></S>
              <div className="ml-[10px] flex h-[33px] w-[60px] items-center bg-white pl-[7px] text-[22px] text-[#111] shadow-[0_1px_1px_rgba(0,0,0,0.25)]">0.</div>
              <div className="ml-[10px] flex h-[33px] w-[246px] items-center bg-white pl-[7px] text-[22px] text-[#111] shadow-[0_1px_1px_rgba(0,0,0,0.25)]">EG</div>
            </div>
            <InfoRow icon={<S w={32} h={26} sw={1.800}><path d="M8 8L2 13h22l6-6zM8 2L3 7h22l5-5zM8 14l-6 5h22l6-6M8 20l-6 5h22l6-6" /></S>} label="00 Arbeitseinstellung" c="mt-[3px]" />
            <InfoRow icon={<S w={32} h={26} sw={1.800}><rect x="2" y="7" width="28" height="12" /><path d="M8 19v-3M14 19v-3M20 19v-3M26 19v-3" /></S>} label="1:100" c="mt-[0px]" />
            <InfoRow icon={<S w={32} h={26} sw={2}><rect x="2" y="3" width="28" height="20" /><rect x="8" y="9" width="16" height="8" /></S>} label="00 Arbeitseinstellung" c="mt-[0px]" />
            <div className={`ml-[6px] mt-[5px] flex h-[40px] w-[356px] shrink-0 items-center justify-center rounded-[12px] text-[22px] leading-none text-[#222] ${white}`}>Einstellungen...</div>
            <div className="mt-[8px] h-[1px] w-full shrink-0 bg-[#dedede]" />
            <div className="flex h-[18px] shrink-0 items-center justify-center pr-[8px]"><div className="h-[2px] w-[140px] bg-[#b5b5b5]" /></div>
            <div className="flex h-[57px] shrink-0 pl-[6px]">
              <div className="flex w-[56px] items-center justify-center rounded-[12px] bg-white shadow-[0_1px_1px_rgba(0,0,0,0.15)]">
                <S w={38} h={36}><path d="M36 11v20a2 2 0 0 1-2 2H10" stroke={B} /><rect x="4" y="3" width="29" height="26" rx="3" strokeWidth="3" /><path d="M9 24V11a3 3 0 0 1 3-3h13" stroke={G} /></S>
              </div>
              <div className={`ml-[4px] flex w-[296px] items-center ${soft}`}>
                <div className="ml-[6px] mr-[9px]"><Floor c={G} fill="transparent" /></div>
                <span className="text-[22px] leading-none text-[#c0c0c0]">0. EG</span>
                <div className="ml-auto mr-[6px]"><R c="#aaa" /></div>
              </div>
            </div>
            <div className="flex h-[72px] shrink-0 items-center">
              <div className="ml-[17px]"><S w={38} h={36} c={G} sw={2}><rect x="2" y="2" width="24" height="18" /><rect x="14" y="12" width="22" height="22" stroke={L} /><path d="M8 8l20 20M8 8h8M8 8v8M28 28h-8M28 28v-8" /></S></div>
              <div className="ml-[82px]"><S w={38} h={36} sw={2} c={L}><path d="M14 22H4a2 2 0 0 1-2-2V4a2 2 0 0 1 2-2h20a2 2 0 0 1 2 2v10" /><path d="M24 14v20M14 24h22M21 17l3-3 3 3M21 31l3 3 3-3M17 21l-3 3 3 3M33 21l3 3-3 3" stroke={G} /></S></div>
              <div className="ml-[21px]"><S w={38} h={36} sw={2} c={L}><path d="M4 12L14 4l14 6-8 14H8z" /><path d="M22 28c6 3 12 0 12-8M31 23l3-4 3 5M22 28l4-5M22 28l5 3" stroke={G} /></S></div>
              <div className="ml-[21px]"><S w={38} h={36} sw={2} c={L}><path d="M24 18V2H2v16h14" /><path d="M12 12h24v20H14V20" /><path d="M12 16l6-5M12 16l6 5M12 16h14c4 0 6 3 5 8" stroke={G} /></S></div>
              <div className="ml-[22px]"><S w={38} h={36} sw={2} c={G}><ellipse cx="19" cy="18" rx="16" ry="15" /><path d="M8 17c1-7 12-10 18-5M26 7v5h-6M30 19c-1 7-12 10-18 5M12 29v-5h6" /></S></div>
            </div>
            <div className="h-[2px] w-full shrink-0 bg-[#d8d8d8]" />
            <div className="mt-[18px] flex h-[24px] shrink-0 items-center pl-[6px] text-[22px] leading-none text-[#8d8d8d]">Transparentpause:</div>
            <div className="mt-[13px] flex h-[57px] shrink-0 items-center pl-[6px]">
              <div className={`flex h-[57px] w-[56px] items-center justify-center gap-[8px] ${soft}`}>
                <div className="h-[24px] w-[24px] bg-[#f39a8e]" />
                <R c="#999" />
              </div>
              <Slider />
              <div className={`ml-[6px] flex h-[57px] w-[26px] items-center justify-center ${soft}`}><R c="#999" /></div>
            </div>
            <div className="mt-[13px] flex h-[24px] shrink-0 items-center pl-[6px] text-[22px] leading-none text-[#8d8d8d]">Aktiv:</div>
            <div className="mt-[13px] flex h-[57px] shrink-0 items-center pl-[6px]">
              <div className={`flex h-[57px] w-[56px] items-center justify-center gap-[6px] ${soft}`}>
                <svg width="26" height="24" viewBox="0 0 26 24">
                  <path d="M13 12V1a12 11 0 0 1 12 10z" fill="#e9806e" />
                  <path d="M13 12L1 11A12 11 0 0 1 13 1z" fill="#7fae7c" />
                  <path d="M13 12l12-1a12 11 0 0 1-24 0z" fill="#86a9ef" />
                </svg>
                <R c="#999" />
              </div>
              <Slider />
            </div>
            <div className="mt-[14px] h-[2px] w-full shrink-0 bg-[#d8d8d8]" />
            <div className="flex h-[76px] shrink-0 items-center pl-[76px]">
              <S w={38} h={36} sw={2} c={L}><path d="M16 20H3a2 2 0 0 1-2-2V4a2 2 0 0 1 2-2h18a2 2 0 0 1 2 2v12" /><path d="M20 34l-8-7 3-2 5 3V16l3 1v6l2-6 3 1v6l3-5 3 2-2 12z" stroke={G} fill="#ebebeb" /></S>
              <div className="ml-[22px]"><S w={38} h={36} sw={2}><path d="M26 8V3H2v20h12" stroke={G} /><rect x="12" y="10" width="24" height="22" stroke={L} /><path d="M24 18v6h-6" stroke={G} /></S></div>
              <div className="ml-[23px]"><S w={38} h={36} sw={2}><path d="M19 6H2v24h17" stroke={G} /><path d="M19 6h17v24H19" stroke={L} /><path d="M19 2v32" stroke={G} /><path d="M14 13l-6 5 6 5" stroke={G} /><path d="M24 13l6 5-6 5" stroke={L} /></S></div>
              <div className="ml-[22px]"><S w={40} h={36} sw={2} c={G}><rect x="2" y="2" width="26" height="20" /><path d="M2 14L14 2M8 22L26 4M18 22l10-8M12 28c8-8 20-8 26-1-6 7-18 8-26 1zM14 34l22-14" /></S></div>
            </div>
          </div>
        </div>

        {/* status bar */}
        <div className="flex h-[50px] shrink-0 items-center border-t-[2px] border-[#e6e6e6] pb-[4px] pl-[2233px]">
          <S w={36} h={30} sw={2.600}><path d="M2 20V3h30M2 3h30v4H2" /><rect x="7" y="9" width="27" height="18" /><path d="M7 13h27" /></S>
          <div className="ml-[20px] mr-[21px] h-[28px] w-[2px] bg-[#a9a9a9]" />
          <span className="whitespace-nowrap text-[26.500px] font-semibold leading-none tracking-[-0.3px] text-[#3a4048]">GRAPHISOFT <span className="font-light text-[#444]">ID</span></span>
        </div>
      </div>

      {/* pen annotation over the window */}
      <svg className="pointer-events-none absolute left-0 top-0" width="2754" height="2288">
        <defs>
          <filter id="rough" x="-5%" y="-5%" width="110%" height="110%">
            <feTurbulence type="fractalNoise" baseFrequency="0.35" numOctaves="2" seed="3" />
            <feDisplacementMap in="SourceGraphic" scale="4" />
          </filter>
        </defs>
        <g filter="url(#rough)" fill="#ea5cf6" stroke="#ea5cf6">
          <rect x="465" y="1702" width="271" height="327" fill="none" strokeWidth="8" />
          <line x1="1328" y1="1317" x2="778" y2="1854" strokeWidth="7" />
          <path d="M766 1838L790 1866 756 1873z" strokeWidth="5" strokeLinejoin="round" />
        </g>
      </svg>
    </div>
  );
}

const Card = ({ label, sel, children }: { label: string; sel?: boolean; children: React.ReactNode }) => (
  <div className="flex h-[320px] flex-col items-center">
    <div className="flex h-[264px] items-center justify-center">{children}</div>
    <div className="flex h-[48px] items-center">
      <span className={sel ? 'rounded-full bg-[#d9d9d9] px-[9px] text-[22px] leading-[26px] text-[#111]' : 'text-[22px] leading-none text-[#111]'}>{label}</span>
    </div>
  </div>
);

const GeoA = ({ hatch }: { hatch?: boolean }) => (
  <div className="flex flex-col items-center">
    <S w={50} h={44} c="#a9a9a9" sw={1.800}>
      <text x="24" y="16" fontSize="17" fill="#a9a9a9" stroke="none" fontFamily="Inter,sans-serif">A1</text>
      <path d="M20 12h-5l-2 14M9 22l4 5 4-5" />
      {hatch && <path d="M3 30h38v10H3zM8 40l5-10M16 40l5-10M24 40l5-10M32 40l5-10" />}
    </S>
  </div>
);
const GeoB = ({ dots }: { dots?: boolean }) => (
  <S w={52} h={44} c="#a9a9a9" sw={1.800}>
    <text x="28" y="16" fontSize="18" fill="#a9a9a9" stroke="none" fontFamily="Inter,sans-serif">A1</text>
    <path d={dots ? 'M24 22h22M8 38l6-18' : 'M24 22h26M24 22h-8l-6 18'} />
    {dots && <path d="M14 19l2 2M20 19l2 2M14 23l2-2M20 23l2-2" />}
    <path d="M5 40h8M9 36v8" />
  </S>
);
const NavSec = ({ children, narrow }: { children: React.ReactNode; narrow?: boolean }) => (
  <div className={narrow ? 'flex h-[37px] w-[120px] shrink-0 items-center justify-between border-l-2 border-[#dcdcdc] pr-[14px]' : 'flex h-[37px] w-[122px] shrink-0 items-center justify-between border-l-2 border-[#dcdcdc] pr-[16px]'}>
    <div className="flex w-[50px] justify-center">{children}</div>
    <R />
  </div>
);
const InfoRow = ({ icon, label, c }: { icon: React.ReactNode; label: string; c: string }) => (
  <div className={`flex h-[42px] shrink-0 items-center pl-[6px] ${c}`}>
    <div className="mr-[7px]">{icon}</div>
    <span className="text-[22px] leading-none text-[#222]">{label}</span>
  </div>
);
